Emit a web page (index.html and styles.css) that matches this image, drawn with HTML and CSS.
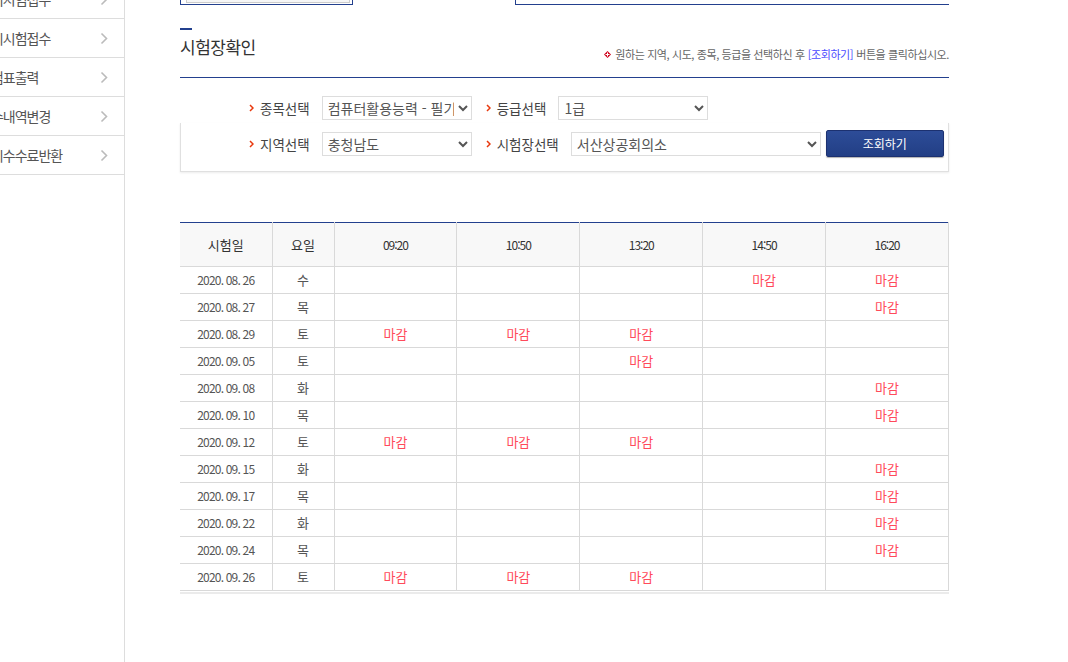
FILE: index.html
```html
<!DOCTYPE html>
<html lang="ko">
<head>
  <meta charset="UTF-8">
  <title>시험장확인</title>
  <link rel="stylesheet" href="styles.css">
</head>
<body>
  <div class="page">
    <aside class="sidebar">
      <ul class="side-menu">
        <li><span class="side-text">정기시험접수</span><svg class="side-arrow" width="8" height="13" viewBox="0 0 8 13"><polyline points="1.5,1.5 6.5,6.5 1.5,11.5" fill="none" stroke="#bbb" stroke-width="1.6"/></svg></li>
        <li><span class="side-text">상시시험접수</span><svg class="side-arrow" width="8" height="13" viewBox="0 0 8 13"><polyline points="1.5,1.5 6.5,6.5 1.5,11.5" fill="none" stroke="#bbb" stroke-width="1.6"/></svg></li>
        <li><span class="side-text">수험표출력</span><svg class="side-arrow" width="8" height="13" viewBox="0 0 8 13"><polyline points="1.5,1.5 6.5,6.5 1.5,11.5" fill="none" stroke="#bbb" stroke-width="1.6"/></svg></li>
        <li><span class="side-text">접수내역변경</span><svg class="side-arrow" width="8" height="13" viewBox="0 0 8 13"><polyline points="1.5,1.5 6.5,6.5 1.5,11.5" fill="none" stroke="#bbb" stroke-width="1.6"/></svg></li>
        <li><span class="side-text">응시수수료반환</span><svg class="side-arrow" width="8" height="13" viewBox="0 0 8 13"><polyline points="1.5,1.5 6.5,6.5 1.5,11.5" fill="none" stroke="#bbb" stroke-width="1.6"/></svg></li>
      </ul>
    </aside>

    <main class="content">
      <div class="tabs">
        <div class="tab tab-on"><div class="tab-inner"></div></div>
        <div class="tab tab-off"></div>
      </div>

      <div class="section-head">
        <div class="title-wrap">
          <span class="title-bar"></span>
          <h2>시험장확인</h2>
        </div>
        <p class="note">
          <svg class="note-icon" width="7" height="7" viewBox="0 0 7 7"><polygon points="3.5,0 7,3.5 3.5,7 0,3.5" fill="#d0021b"/><rect x="3" y="1.5" width="1" height="4" fill="#fff"/><rect x="1.5" y="3" width="4" height="1" fill="#fff"/></svg>
          원하는 지역, 시도, 종목, 등급을 선택하신 후 <span class="note-link">[조회하기]</span> 버튼을 클릭하십시오.
        </p>
      </div>

      <div class="search">
        <div class="search-row first-row">
          <label class="field-label"><svg class="label-arrow" width="5" height="8" viewBox="0 0 5 8"><polyline points="1,1 4,4 1,7" fill="none" stroke="#e8380d" stroke-width="1.5"/></svg>종목선택</label>
          <select class="sel sel-md">
            <option>컴퓨터활용능력 - 필기</option>
          </select>
          <label class="field-label"><svg class="label-arrow" width="5" height="8" viewBox="0 0 5 8"><polyline points="1,1 4,4 1,7" fill="none" stroke="#e8380d" stroke-width="1.5"/></svg>등급선택</label>
          <select class="sel sel-md">
            <option>1급</option>
          </select>
        </div>
        <div class="search-box">
          <div class="search-row">
            <label class="field-label"><svg class="label-arrow" width="5" height="8" viewBox="0 0 5 8"><polyline points="1,1 4,4 1,7" fill="none" stroke="#e8380d" stroke-width="1.5"/></svg>지역선택</label>
            <select class="sel sel-md">
              <option>충청남도</option>
            </select>
            <label class="field-label"><svg class="label-arrow" width="5" height="8" viewBox="0 0 5 8"><polyline points="1,1 4,4 1,7" fill="none" stroke="#e8380d" stroke-width="1.5"/></svg>시험장선택</label>
            <select class="sel sel-lg">
              <option>서산상공회의소</option>
            </select>
            <button class="btn-search">조회하기</button>
          </div>
        </div>
      </div>

      <div class="table-wrap">
        <table class="sched">
          <colgroup>
            <col class="c-date"><col class="c-day">
            <col><col><col><col><col>
          </colgroup>
          <thead>
            <tr>
              <th>시험일</th><th>요일</th>
              <th class="time">09:20</th><th class="time">10:50</th><th class="time">13:20</th><th class="time">14:50</th><th class="time">16:20</th>
            </tr>
          </thead>
          <tbody id="rows"></tbody>
        </table>
      </div>
    </main>
  </div>

  <script>
    // 시험일 / 요일 / 마감 회차 (0~4)
    const data = [
      ['2020. 08. 26', '수', [3, 4]],
      ['2020. 08. 27', '목', [4]],
      ['2020. 08. 29', '토', [0, 1, 2]],
      ['2020. 09. 05', '토', [2]],
      ['2020. 09. 08', '화', [4]],
      ['2020. 09. 10', '목', [4]],
      ['2020. 09. 12', '토', [0, 1, 2]],
      ['2020. 09. 15', '화', [4]],
      ['2020. 09. 17', '목', [4]],
      ['2020. 09. 22', '화', [4]],
      ['2020. 09. 24', '목', [4]],
      ['2020. 09. 26', '토', [0, 1, 2]]
    ];

    const tbody = document.getElementById('rows');
    data.forEach(([date, day, closed]) => {
      let html = `<td class="date">${date}</td><td class="day">${day}</td>`;
      for (let i = 0; i < 5; i++) {
        html += closed.includes(i) ? '<td class="closed">마감</td>' : '<td></td>';
      }
      const tr = document.createElement('tr');
      tr.innerHTML = html;
      tbody.appendChild(tr);
    });
  </script>
</body>
</html>
```

FILE: styles.css
```css
* {
  margin: 0;
  padding: 0;
  box-sizing: border-box;
}

body {
  font-family: "Noto Sans CJK KR", "Noto Sans", sans-serif;
  background: #fff;
  color: #555;
  overflow: hidden;
}

.page {
  display: flex;
  min-height: 662px;
}

/* 좌측 메뉴 */
.sidebar {
  width: 125px;
  border-right: 1px solid #ddd;
  flex-shrink: 0;
}

.side-menu {
  list-style: none;
  margin-top: -20px;
}

.side-menu li {
  height: 39px;
  border-bottom: 1px solid #ddd;
  display: flex;
  align-items: center;
  justify-content: space-between;
  overflow: hidden;
  padding-right: 16px;
}

.side-text {
  margin-left: -21px;
  font-size: 14px;
  letter-spacing: -1px;
  color: #555;
  white-space: nowrap;
}

.side-arrow {
  display: block;
}

/* 본문 */
.content {
  width: 769px;
  margin-left: 55px;
}

.tabs {
  display: flex;
  height: 5px;
}

.tab {
  height: 5px;
}

.tab-on {
  width: 173px;
  border: 1px solid #23408e;
  border-top: none;
  padding: 0 2px 1px 5px;
}

.tab-inner {
  height: 3px;
  border: 1px solid #ccc;
  border-top: none;
  background: #f6f6f6;
}

.tab-off {
  width: 434px;
  margin-left: 162px;
  border-left: 1px solid #23408e;
  border-bottom: 1px solid #23408e;
}

.section-head {
  margin-top: 23px;
  display: flex;
  justify-content: space-between;
  align-items: flex-end;
  padding-bottom: 16px;
  border-bottom: 1px solid #23408e;
}

.title-bar {
  display: block;
  width: 12px;
  height: 2px;
  background: #23408e;
  margin-bottom: 6px;
}

.title-wrap h2 {
  font-size: 17px;
  line-height: 22px;
  font-weight: normal;
  color: #333;
  letter-spacing: -0.5px;
  margin-bottom: 3px;
}

.note {
  font-size: 11px;
  line-height: 14px;
  color: #666;
  letter-spacing: -0.4px;
  display: flex;
  align-items: center;
  white-space: nowrap;
}

.note-icon {
  margin-right: 4px;
}

.note-link {
  color: #4b4bff;
  margin: 0 3px;
}

/* 검색 */
.search {
  padding-top: 18px;
}

.search-row {
  display: flex;
  align-items: center;
}

.first-row {
  padding-left: 69px;
}

.search-box {
  margin-top: 3px;
  border: 1px solid #e0e0e0;
  border-top: none;
  box-shadow: 0 1px 2px rgba(0, 0, 0, 0.08);
  padding: 7px 0 14px 68px;
}

.field-label {
  display: flex;
  align-items: center;
  font-size: 13.5px;
  color: #444;
  padding-right: 12px;
  white-space: nowrap;
}

.label-arrow {
  margin-right: 6px;
}

.sel {
  height: 24px;
  border: 1px solid #ddd;
  border-radius: 0;
  background: #fff;
  font-family: "Noto Sans CJK KR", sans-serif;
  font-size: 14px;
  color: #555;
  padding: 0 1px;
  margin-right: 14px;
}

.sel-md {
  width: 150px;
}

.sel-lg {
  width: 250px;
  margin-right: 5px;
}

.btn-search {
  width: 118px;
  height: 27px;
  border: 1px solid #1c3170;
  border-radius: 2px;
  background: linear-gradient(to bottom, #2d4c98, #223f85);
  color: #fff;
  font-family: "Noto Sans CJK KR", sans-serif;
  font-size: 12px;
  box-shadow: 0 1px 1px rgba(0, 0, 0, 0.3);
}

/* 일정표 */
.table-wrap {
  margin-top: 50px;
  border-bottom: 2px solid #ebebeb;
  padding-bottom: 1px;
}

.sched {
  width: 769px;
  border-collapse: collapse;
  table-layout: fixed;
  border-top: 1px solid #23408e;
}

.c-date {
  width: 92px;
}

.c-day {
  width: 62px;
}

.sched th,
.sched td {
  border-right: 1px solid #d9d9d9;
  border-bottom: 1px solid #d9d9d9;
  text-align: center;
}

.sched th {
  height: 44px;
  background: #f8f8f8;
  font-size: 13px;
  font-weight: normal;
  color: #333;
}

.sched th.time {
  font-size: 12px;
  letter-spacing: -1px;
}

.sched td {
  height: 27px;
  font-size: 13px;
  line-height: 16px;
  color: #555;
}

.sched td.date {
  font-size: 12px;
  letter-spacing: -0.8px;
}

.sched td.closed {
  color: #ff4a5a;
}
```
